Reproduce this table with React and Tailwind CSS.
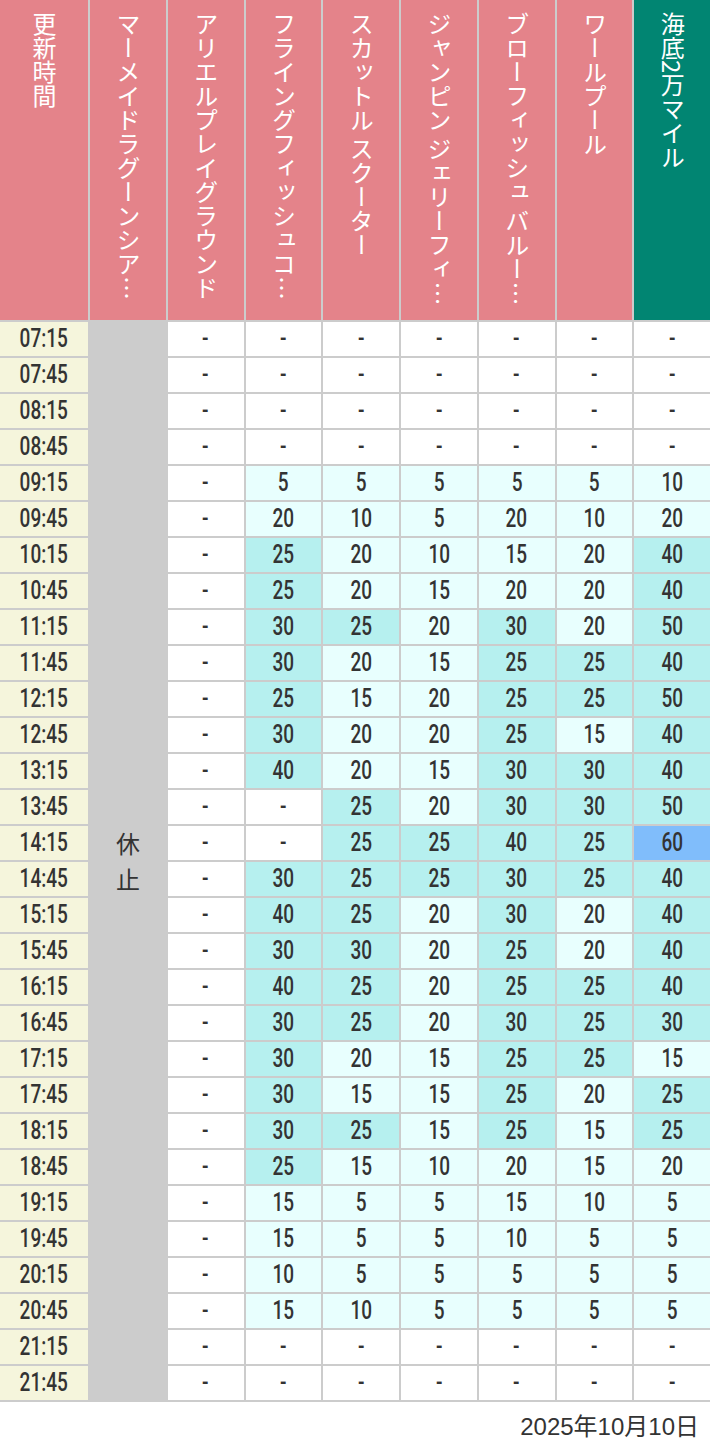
import React from 'react'

const heads = [
  { name: '更新時間', teal: false },
  { name: 'マーメイドラグーンシア…', teal: false },
  { name: 'アリエルプレイグラウンド', teal: false },
  { name: 'フライングフィッシュコ…', teal: false },
  { name: 'スカットル スクーター', teal: false },
  { name: 'ジャンピン ジェリーフィ…', teal: false },
  { name: 'ブローフィッシュ バルー…', teal: false },
  { name: 'ワールプール', teal: false },
  { name: '海底2万マイル', teal: true },
]

const rows = [
  ['07:15', '-', '-', '-', '-', '-', '-', '-'],
  ['07:45', '-', '-', '-', '-', '-', '-', '-'],
  ['08:15', '-', '-', '-', '-', '-', '-', '-'],
  ['08:45', '-', '-', '-', '-', '-', '-', '-'],
  ['09:15', '-', '5', '5', '5', '5', '5', '10'],
  ['09:45', '-', '20', '10', '5', '20', '10', '20'],
  ['10:15', '-', '25', '20', '10', '15', '20', '40'],
  ['10:45', '-', '25', '20', '15', '20', '20', '40'],
  ['11:15', '-', '30', '25', '20', '30', '20', '50'],
  ['11:45', '-', '30', '20', '15', '25', '25', '40'],
  ['12:15', '-', '25', '15', '20', '25', '25', '50'],
  ['12:45', '-', '30', '20', '20', '25', '15', '40'],
  ['13:15', '-', '40', '20', '15', '30', '30', '40'],
  ['13:45', '-', '-', '25', '20', '30', '30', '50'],
  ['14:15', '-', '-', '25', '25', '40', '25', '60'],
  ['14:45', '-', '30', '25', '25', '30', '25', '40'],
  ['15:15', '-', '40', '25', '20', '30', '20', '40'],
  ['15:45', '-', '30', '30', '20', '25', '20', '40'],
  ['16:15', '-', '40', '25', '20', '25', '25', '40'],
  ['16:45', '-', '30', '25', '20', '30', '25', '30'],
  ['17:15', '-', '30', '20', '15', '25', '25', '15'],
  ['17:45', '-', '30', '15', '15', '25', '20', '25'],
  ['18:15', '-', '30', '25', '15', '25', '15', '25'],
  ['18:45', '-', '25', '15', '10', '20', '15', '20'],
  ['19:15', '-', '15', '5', '5', '15', '10', '5'],
  ['19:45', '-', '15', '5', '5', '10', '5', '5'],
  ['20:15', '-', '10', '5', '5', '5', '5', '5'],
  ['20:45', '-', '15', '10', '5', '5', '5', '5'],
  ['21:15', '-', '-', '-', '-', '-', '-', '-'],
  ['21:45', '-', '-', '-', '-', '-', '-', '-'],
]

// condensed look, squeezed roboto
const Num = ({ children }) => (
  <span className="inline-block scale-x-[0.76] text-[25px] font-medium font-['Roboto',sans-serif]">
    {children}
  </span>
)

function cellBg(v) {
  if (v === '-') return 'bg-white'
  const n = parseInt(v)
  if (n >= 60) return 'bg-[#80bdfb]'
  if (n >= 25) return 'bg-[#b6f0ef]'
  return 'bg-[#e8fffe]'
}

const App = () => {
  return (
    <div className='w-[710px] bg-white text-[#333]'>
      <div className='grid grid-cols-[88px_repeat(8,minmax(0,1fr))] grid-rows-[320px] auto-rows-[34px] gap-[2px] bg-[#cccccc] pb-[2px]'>
        {heads.map((h) => (
          <div key={h.name} className={'flex justify-center pt-[12px] ' + (h.teal ? 'bg-[#018572]' : 'bg-[#e4838a]')}>
            <div className="[writing-mode:vertical-rl] text-white text-[24px] leading-[28px] font-['Noto_Sans_CJK_JP',sans-serif] whitespace-nowrap">
              {h.name}
            </div>
          </div>
        ))}
        {rows.map((r, i) => (
          <React.Fragment key={r[0]}>
            <div className='flex items-center justify-center bg-[#f5f5dc]'>
              <Num>{r[0]}</Num>
            </div>
            {i === 0 && (
              <div className="row-span-30 bg-[#cccccc] flex items-center justify-center text-[24px] leading-[36px] font-['Noto_Sans_CJK_JP',sans-serif]">
                <div className='flex flex-col items-center'>
                  <span>休</span>
                  <span>止</span>
                </div>
              </div>
            )}
            {r.slice(1).map((v, j) => (
              <div key={j} className={'flex items-center justify-center ' + cellBg(v)}>
                <Num>{v}</Num>
              </div>
            ))}
          </React.Fragment>
        ))}
      </div>
      <div className="h-[50px] flex items-center justify-end pr-[11px] text-[24px] font-['Liberation_Sans','Noto_Sans_CJK_JP',sans-serif]">
        2025年10月10日
      </div>
    </div>
  )
}

export default App
